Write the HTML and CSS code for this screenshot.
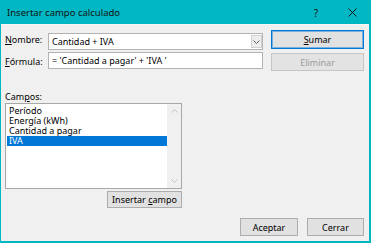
FILE: index.html
```html
<!DOCTYPE html>
<html lang="es">
<head>
    <meta charset="UTF-8">
    <title>Insertar campo calculado</title>
    <link rel="stylesheet" href="styles.css">
</head>
<body>

<div class="dialog">
    <div class="titlebar">
        <span class="title">Insertar campo calculado</span>
        <span class="help">?</span>
        <span class="close">
            <svg width="9" height="9" viewBox="0 0 9 9"><path d="M0.5 0.5L8.5 8.5M8.5 0.5L0.5 8.5" stroke="#1a1a1a" stroke-width="1"/></svg>
        </span>
    </div>

    <div class="content">
        <!-- name / formula rows -->
        <div class="fields">
            <label class="label"><u>N</u>ombre:</label>
            <div class="combo">
                <span class="value">Cantidad + IVA</span>
                <span class="drop">
                    <svg width="7" height="4" viewBox="0 0 7 4"><path d="M0.5 0.5L3.5 3.5L6.5 0.5" fill="none" stroke="#606060" stroke-width="1"/></svg>
                </span>
            </div>
            <button class="btn btn-default"><u>S</u>umar</button>

            <label class="label"><u>F</u>órmula:</label>
            <div class="textbox">= 'Cantidad a pagar' + 'IVA '</div>
            <button class="btn btn-side" disabled>Eliminar</button>
        </div>

        <div class="campos">
            <div class="label">Cam<u>p</u>os:</div>
            <div class="listbox">
                <ul class="items">
                    <li>Período</li>
                    <li>Energía (kWh)</li>
                    <li>Cantidad a pagar</li>
                    <li class="selected">IVA</li>
                </ul>
                <div class="scrollbar">
                    <span class="arrow">
                        <svg width="7" height="4" viewBox="0 0 7 4"><path d="M0.5 3.5L3.5 0.5L6.5 3.5" fill="none" stroke="#c2c2c2" stroke-width="1"/></svg>
                    </span>
                    <span class="arrow">
                        <svg width="7" height="4" viewBox="0 0 7 4"><path d="M0.5 0.5L3.5 3.5L6.5 0.5" fill="none" stroke="#c2c2c2" stroke-width="1"/></svg>
                    </span>
                </div>
            </div>
            <button class="btn btn-insert">Insertar <u>c</u>ampo</button>
        </div>

        <div class="footer">
            <button class="btn btn-ok">Aceptar</button>
            <button class="btn btn-close">Cerrar</button>
        </div>
    </div>
</div>

</body>
</html>
```

FILE: styles.css
```css
body {
    margin: 0;
    font-family: "Noto Sans", sans-serif;
    font-size: 9px;
    color: #000;
    background-color: #f0f0f0;
}
.dialog {
    width: 371px;
    height: 243px;
    box-sizing: border-box;
    border: 1px solid #00b7c3;
    border-right-width: 2px;
    border-bottom-width: 2px;
    background-color: #f0f0f0;
    display: flex;
    flex-direction: column;
}
.titlebar {
    height: 23px;
    background-color: #00b7c3;
    border-bottom: 1px solid #f7f7f7;
    display: flex;
    align-items: center;
    padding-left: 6px;
    flex-shrink: 0;
}
.title {
    font-size: 9.5px;
    color: #111;
}
.help {
    margin-left: auto;
    width: 38px;
    text-align: center;
    font-size: 10px;
    color: #111;
}
.close {
    width: 34px;
    display: flex;
    justify-content: center;
}
.content {
    padding: 5px 5px 0 4px;
    display: flex;
    flex-direction: column;
}
.fields {
    display: grid;
    grid-template-columns: 43px 215px 1fr;
    grid-template-rows: 19px 18px;
    row-gap: 4px;
}
.label {
    align-self: center;
    line-height: 12px;
}
.combo {
    align-self: end;
    margin-bottom: -1px;
    height: 17px;
    box-sizing: border-box;
    border: 1px solid #b3b3b3;
    background-color: #fff;
    display: flex;
    align-items: center;
    padding-left: 3px;
}
.value {
    flex: 1;
}
.drop {
    width: 11px;
    height: 13px;
    box-sizing: border-box;
    border: 1px solid #d2d2d2;
    background-color: #ededed;
    display: flex;
    align-items: center;
    justify-content: center;
}
.textbox {
    align-self: start;
    margin-top: -1px;
    height: 17px;
    box-sizing: border-box;
    border: 1px solid #b3b3b3;
    background-color: #fff;
    padding-left: 3px;
    line-height: 15px;
}
.btn {
    box-sizing: border-box;
    border: 1px solid #adadad;
    background-color: #e1e1e1;
    font-family: inherit;
    font-size: 9px;
    color: #000;
    padding: 0;
    height: 18px;
}
.btn-default,
.btn-side {
    justify-self: end;
    width: 93px;
}
.btn-default {
    height: 19px;
    border-color: #0078d7;
    box-shadow: inset 0 0 0 1px rgba(0, 120, 215, 0.45);
}
.btn:disabled {
    color: #9c9c9c;
    border-color: #c6c6c6;
    background-color: #e3e3e3;
}
.campos {
    margin-top: 20px;
    width: 177px;
    display: flex;
    flex-direction: column;
}
.campos .label {
    align-self: flex-start;
    height: 12px;
}
.listbox {
    height: 86px;
    box-sizing: border-box;
    border: 1px solid #a8a8a8;
    background-color: #fff;
    display: flex;
}
.items {
    flex: 1;
    list-style: none;
    margin: 0;
    padding: 2px 0 0 1px;
}
.items li {
    height: 10px;
    line-height: 10px;
    padding-left: 2px;
    white-space: nowrap;
}
.items .selected {
    background-color: #0078d7;
    color: #fff;
}
.scrollbar {
    width: 14px;
    background-color: #f0f0f0;
    display: flex;
    flex-direction: column;
    justify-content: space-between;
}
.arrow {
    height: 14px;
    display: flex;
    align-items: center;
    justify-content: center;
}
.btn-insert {
    align-self: flex-end;
    margin-top: 2px;
    width: 75px;
    height: 17px;
}
.footer {
    margin-top: 10px;
    display: flex;
    justify-content: flex-end;
    gap: 9px;
}
.btn-ok {
    width: 58px;
}
.btn-close {
    width: 57px;
}
u {
    text-underline-offset: 1px;
}
```
